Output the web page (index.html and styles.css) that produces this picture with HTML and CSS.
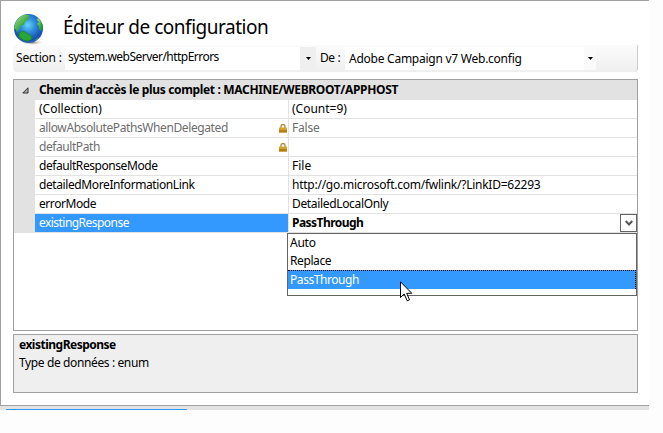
FILE: index.html
```html
<!DOCTYPE html>
<html lang="fr">
<head>
<meta charset="utf-8">
<title>Éditeur de configuration</title>
<link rel="stylesheet" href="styles.css">
</head>
<body>
<main class="window">
  <header class="title">
    <svg class="globe" width="34" height="34" viewBox="0 0 34 34">
      <defs>
        <radialGradient id="sea" cx="48%" cy="38%" r="62%"><stop offset="0" stop-color="#68d5f5"/><stop offset=".4" stop-color="#2f8ddd"/><stop offset=".85" stop-color="#174fae"/><stop offset="1" stop-color="#3568b5"/></radialGradient>
        <linearGradient id="land" x2="1" y2="1"><stop stop-color="#b2df91"/><stop offset=".6" stop-color="#35a83c"/><stop offset="1" stop-color="#148527"/></linearGradient>
        <radialGradient id="shade"><stop stop-color="#777"/><stop offset="1" stop-color="#fff" stop-opacity="0"/></radialGradient>
      </defs>
      <ellipse cx="19" cy="29.500" rx="13" ry="3" fill="url(#shade)"/>
      <circle cx="15.500" cy="15.500" r="14.500" fill="url(#sea)"/>
      <path d="M2 11C4 6 8 2 13 1.500l4 1-2 2 1 2-4 2-1 3-3 1-2 4-2 3-1-3-2-1z" fill="url(#land)"/>
      <path d="M25 5c3 2 5 6 5 10l-2 3-2-2 0-3-2-2 2-2-2-2z" fill="url(#land)"/>
      <path d="M6 20l4-2 4 2 4 3 1 3-4 2-5-1-4-3z" fill="#2aa637" stroke="#158329" stroke-width=".7"/>
      <path d="M22 27l4-3-2 3z" fill="#36a64a"/>
    </svg>
    <h1>Éditeur de configuration</h1>
  </header>
  <div class="toolbar">
    <span class="lab section"><span class="t1">Section :</span></span>
    <div class="combo first"><span class="t2">system.webServer/httpErrors</span><i class="drop"><svg width="5" height="3" viewBox="0 0 5 3"><path d="M0 0h5L2.500 3z"/></svg></i></div>
    <span class="lab from"><span class="t3">De :</span></span>
    <div class="combo second"><span class="t4">Adobe Campaign v7 Web.config</span><i class="drop"><svg width="5" height="3" viewBox="0 0 5 3"><path d="M0 0h5L2.500 3z"/></svg></i></div>
  </div>
  <section class="grid">
    <div class="group"><svg width="7" height="7" viewBox="0 0 7 7"><path d="M6 .8V6H.8z" fill="#aaa" stroke="#333"/></svg><b class="t5">Chemin d'accès le plus complet : MACHINE/WEBROOT/APPHOST</b></div>
    <div class="row"><div class="key"><span class="k1">(Collection)</span></div><div class="val"><span class="v1">(Count=9)</span></div></div>
    <div class="row locked"><div class="key"><span class="k2">allowAbsolutePathsWhenDelegated</span><svg class="lock" width="8" height="9" viewBox="0 0 8 9"><path d="M2 4V2.500a2 2 0 0 1 4 0V4" fill="none" stroke="#ad8a35" stroke-width="1.300"/><rect y="3.500" width="8" height="5" rx=".5" fill="#d5a32a"/><path d="M0 6h8v2.500H0z" fill="#b77d13"/></svg></div><div class="val"><span class="v2">False</span></div></div>
    <div class="row locked"><div class="key"><span class="k3">defaultPath</span><svg class="lock" width="8" height="9" viewBox="0 0 8 9"><path d="M2 4V2.500a2 2 0 0 1 4 0V4" fill="none" stroke="#ad8a35" stroke-width="1.300"/><rect y="3.500" width="8" height="5" rx=".5" fill="#d5a32a"/><path d="M0 6h8v2.500H0z" fill="#b77d13"/></svg></div><div class="val"></div></div>
    <div class="row"><div class="key"><span class="k4">defaultResponseMode</span></div><div class="val"><span class="v4">File</span></div></div>
    <div class="row"><div class="key"><span class="k5">detailedMoreInformationLink</span></div><div class="val"><span class="v5">http://go.microsoft.com/fwlink/?LinkID=62293</span></div></div>
    <div class="row"><div class="key"><span class="k6">errorMode</span></div><div class="val"><span class="v6">DetailedLocalOnly</span></div></div>
    <div class="row selected"><div class="key"><span class="k7">existingResponse</span></div><div class="val"><b class="v7">PassThrough</b><span class="open"><svg width="8" height="7" viewBox="0 0 8 7"><path d="M.7 1L4 4.500 7.300 1" fill="none" stroke="#555" stroke-width="2"/></svg></span></div></div>
    <div class="menu">
      <div class="item"><span class="m1">Auto</span></div>
      <div class="item"><span class="m2">Replace</span></div>
      <div class="item active"><span class="m3">PassThrough</span></div>
    </div>
    <svg class="cursor" width="13" height="21" viewBox="0 0 13 21"><path d="M.5 .8V16.500L4.200 13 7.200 19.800 9.500 18.800 6.700 12.300H11.800z" fill="#fff" stroke="#000"/></svg>
  </section>
  <section class="help"><b class="h1t">existingResponse</b><span class="h2t">Type de données : enum</span></section>
</main>
<div class="edge"></div>
<div class="progress"></div>
</body>
</html>
```
FILE: styles.css
```css
* { box-sizing: border-box; }
body { margin: 0; height: 433px; overflow: hidden; background: #fdfdfd; color: #000; font: 12px/18px "Noto Sans", "Open Sans", sans-serif; }
span, b, h1 { white-space: nowrap; }
.window { width: 649px; height: 406px; padding: 0 0 0 12px; background: #fff; border: 1px solid #a0a0a0; border-right: 0; display: flex; flex-direction: column; }
.title { height: 44px; display: flex; align-items: flex-start; flex: none; }
.globe { margin-top: 12px; flex: none; }
h1 { margin: 10px 0 0 16px; font-size: 19px; line-height: 32px; font-weight: 400; letter-spacing: -.49px; }
.toolbar { width: 625px; height: 27px; flex: none; padding: 2px 0; display: flex; background: linear-gradient(#fbfbfb, #efefef); border-radius: 0 0 4px 4px; border-right: 1px solid #ccc; }
.lab { flex: none; line-height: 22px; }
.section { width: 52px; padding-left: 3px; }
.from { width: 29px; padding-left: 4px; }
.combo { display: flex; justify-content: space-between; height: 23px; background: #fff; flex: none; line-height: 20px; }
.first { width: 251px; padding-left: 3px; }
.second { width: 251px; padding-left: 4px; line-height: 23px; }
.drop { width: 16px; background: #efefef; display: flex; align-items: center; justify-content: center; }
.second .drop { width: 12px; background: #fafafa; }
.grid { position: relative; width: 625px; height: 252px; margin-top: 7px; flex: none; border: 1px solid #a0a0a0; }
.group { height: 20px; background: #e2e2e2; display: flex; align-items: center; padding-left: 8px; }
.group b { margin-left: 10px; line-height: 20px; }
.row { height: 19px; display: flex; border-left: 21px solid #e2e2e2; line-height: 18px; }
.key { width: 254px; height: 19px; border-right: 1px solid #e2e2e2; border-bottom: 1px solid #e2e2e2; padding: 0 1px 0 4px; display: flex; justify-content: space-between; align-items: center; }
.val { flex: 1; border-bottom: 1px solid #e2e2e2; padding-left: 3px; display: flex; justify-content: space-between; }
.locked { color: #6d6d6d; }
.lock { flex: none; margin-top: 1px; }
.selected .key { background: linear-gradient(#39f, #39f) no-repeat 0 0 / 100% 18px; color: #fff; }
.open { width: 17px; height: 18px; border: 1px solid #646464; display: flex; align-items: center; justify-content: center; }
.menu { position: absolute; left: 273px; top: 153px; width: 350px; height: 63px; background: #fff; border: 1px solid #646464; }
.item { height: 18px; padding-left: 2px; line-height: 18px; }
.active { height: 19px; background: #39f; color: #fff; border: 1px dotted #000; border-width: 1px 1px 0 0; line-height: 17px; }
.cursor { position: absolute; left: 386px; top: 201px; }
.help { width: 625px; height: 59px; margin-top: 3px; flex: none; background: #efefef; border: 1px solid #a0a0a0; padding: 1px 5px; display: flex; flex-direction: column; align-items: flex-start; }
.edge { width: 649px; height: 3px; background: #e2e2e2; }
.progress { width: 649px; height: 1px; background: linear-gradient(#39f, #39f) no-repeat 6px 0 / 181px 1px #e2e2e2; }
.t1, .v2 { letter-spacing: -.2px; }
.t2 { letter-spacing: -.53px; }
.t3, .k2, .k5, .m2 { letter-spacing: -.4px; }
.t4, .v5, .m1 { letter-spacing: -.25px; }
.t5, .v6 { letter-spacing: -.34px; }
.k3, .k4, .k6, .m3 { letter-spacing: -.43px; }
.k7, .v7 { letter-spacing: -.54px; }
.h1t { letter-spacing: -.5px; }
.h2t { letter-spacing: -.38px; }
```
